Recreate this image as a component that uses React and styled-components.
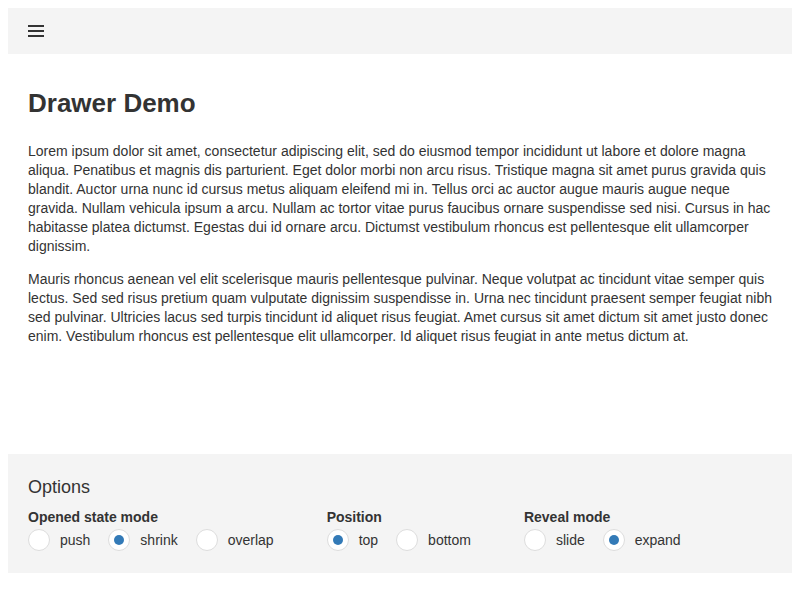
import React from 'react';
import styled, { createGlobalStyle } from 'styled-components';

const GlobalStyle = createGlobalStyle`
  body {
    margin: 8px;
    background: #fff;
    font-family: 'Liberation Sans', Arial, sans-serif;
    color: #333;
  }
`;

const Toolbar = styled.div`
  height: 46px;
  display: flex;
  align-items: center;
  padding: 0 20px;
  background-color: #f4f4f4;
`;

const MenuButton = styled.div`
  width: 16px;
  height: 12px;
  display: flex;
  flex-direction: column;
  justify-content: space-between;
  cursor: pointer;
`;

const MenuLine = styled.span`
  display: block;
  height: 2px;
  background-color: #333;
`;

const Content = styled.div`
  height: 400px;
  padding: 20px;
  box-sizing: border-box;
`;

const Title = styled.h1`
  margin: 14px 0 24px;
  font-size: 26px;
  line-height: 30px;
  font-weight: bold;
  color: #333;
`;

const Text = styled.p`
  margin: 0 0 14px;
  font-size: 14px;
  line-height: 19px;
  color: #333;
`;

const Options = styled.div`
  padding: 22px 20px 22px;
  background-color: #f4f4f4;
`;

const OptionsTitle = styled.div`
  font-size: 18px;
  line-height: 22px;
  margin-bottom: 11px;
  color: #333;
`;

const Groups = styled.div`
  display: flex;
  gap: 53px;
`;

const Group = styled.div`
  display: flex;
  flex-direction: column;
`;

const GroupLabel = styled.div`
  font-size: 14px;
  line-height: 16px;
  font-weight: bold;
  margin-bottom: 4px;
  color: #333;
`;

const RadioRow = styled.div`
  display: flex;
  align-items: center;
  gap: 18px;
`;

const RadioItem = styled.label`
  display: flex;
  align-items: center;
  gap: 10px;
  font-size: 14px;
  color: #333;
  cursor: pointer;
`;

const Circle = styled.span`
  width: 20px;
  height: 20px;
  border: 1px solid #ddd;
  border-radius: 50%;
  background-color: #fff;
  display: flex;
  align-items: center;
  justify-content: center;

  &::after {
    content: '';
    width: 10px;
    height: 10px;
    border-radius: 50%;
    background-color: ${props => props.checked ? '#337ab7' : 'transparent'};
  }
`;

const groups = [
  { label: 'Opened state mode', items: ['push', 'shrink', 'overlap'], value: 'shrink' },
  { label: 'Position', items: ['top', 'bottom'], value: 'top' },
  { label: 'Reveal mode', items: ['slide', 'expand'], value: 'expand' }
];

export default function App() {
  return (
    <>
      <GlobalStyle />
      <Toolbar>
        <MenuButton>
          <MenuLine />
          <MenuLine />
          <MenuLine />
        </MenuButton>
      </Toolbar>
      <Content>
        <Title>Drawer Demo</Title>
        <Text>
          Lorem ipsum dolor sit amet, consectetur adipiscing elit, sed do eiusmod tempor incididunt ut labore et dolore magna aliqua. Penatibus et magnis dis parturient. Eget dolor morbi non arcu risus. Tristique magna sit amet purus gravida quis blandit. Auctor urna nunc id cursus metus aliquam eleifend mi in. Tellus orci ac auctor augue mauris augue neque gravida. Nullam vehicula ipsum a arcu. Nullam ac tortor vitae purus faucibus ornare suspendisse sed nisi. Cursus in hac habitasse platea dictumst. Egestas dui id ornare arcu. Dictumst vestibulum rhoncus est pellentesque elit ullamcorper dignissim.
        </Text>
        <Text>
          Mauris rhoncus aenean vel elit scelerisque mauris pellentesque pulvinar. Neque volutpat ac tincidunt vitae semper quis lectus. Sed sed risus pretium quam vulputate dignissim suspendisse in. Urna nec tincidunt praesent semper feugiat nibh sed pulvinar. Ultricies lacus sed turpis tincidunt id aliquet risus feugiat. Amet cursus sit amet dictum sit amet justo donec enim. Vestibulum rhoncus est pellentesque elit ullamcorper. Id aliquet risus feugiat in ante metus dictum at.
        </Text>
      </Content>
      <Options>
        <OptionsTitle>Options</OptionsTitle>
        <Groups>
          {groups.map(g => (
            <Group key={g.label}>
              <GroupLabel>{g.label}</GroupLabel>
              <RadioRow>
                {g.items.map(item => (
                  <RadioItem key={item}>
                    <Circle checked={item === g.value} />
                    <span>{item}</span>
                  </RadioItem>
                ))}
              </RadioRow>
            </Group>
          ))}
        </Groups>
      </Options>
    </>
  );
}
